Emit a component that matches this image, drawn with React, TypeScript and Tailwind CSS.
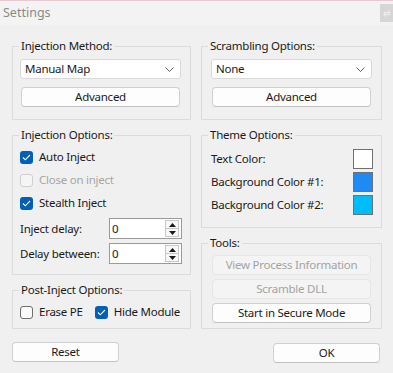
import React from "react";

const font = { fontFamily: '"Segoe UI", "Noto Sans", sans-serif' };

function Group({
  label,
  className,
  children,
}: {
  label: string;
  className?: string;
  children: React.ReactNode;
}) {
  return (
    <div className={"relative border border-[#dcdcdc] " + (className || "")}>
      <span className="absolute top-[-9px] left-[6px] whitespace-nowrap bg-[#f0f0f0] px-[2px] leading-[16px] text-[#1a1a1a]">
        {label}
      </span>
      {children}
    </div>
  );
}

function Button({
  children,
  disabled,
  className,
}: {
  children: React.ReactNode;
  disabled?: boolean;
  className?: string;
}) {
  return (
    <div
      className={
        "flex h-[20px] items-center justify-center whitespace-nowrap rounded-[4px] border leading-none " +
        (disabled
          ? "border-[#e6e6e6] bg-[#f4f4f4] text-[#a3a3a3] "
          : "border-[#d0d0d0] border-b-[#c2c2c2] bg-[#fdfdfd] text-[#1a1a1a] ") +
        (className || "")
      }
    >
      {children}
    </div>
  );
}

function Combo({ value }: { value: string }) {
  return (
    <div className="flex h-[20px] items-center justify-between rounded-[3px] border border-[#d9d9d9] bg-white pl-[4px] pr-[6px] text-[#1a1a1a]">
      <span>{value}</span>
      <svg width="9" height="5" viewBox="0 0 9 5">
        <polyline points="0.5,0.5 4.5,4.5 8.5,0.5" fill="none" stroke="#606060" strokeWidth="1" />
      </svg>
    </div>
  );
}

function Check({
  label,
  checked,
  disabled,
  className,
}: {
  label: string;
  checked?: boolean;
  disabled?: boolean;
  className?: string;
}) {
  return (
    <div className={"flex h-[20px] shrink-0 items-center gap-[6px] whitespace-nowrap " + (className || "")}>
      {checked ? (
        <div className="flex h-[13px] w-[13px] shrink-0 items-center justify-center rounded-[3px] bg-[#005fb8]">
          <svg width="9" height="7" viewBox="0 0 9 7">
            <polyline points="1,3.5 3.3,5.8 8,1" fill="none" stroke="#ffffff" strokeWidth="1.1" />
          </svg>
        </div>
      ) : (
        <div
          className={
            "h-[13px] w-[13px] shrink-0 rounded-[3px] border " +
            (disabled ? "border-[#cfcfcf] bg-[#f5f5f5]" : "border-[#6e6e6e] bg-[#fafafa]")
          }
        />
      )}
      <span className={disabled ? "text-[#a6a6a6]" : "text-[#1a1a1a]"}>{label}</span>
    </div>
  );
}

function Spin({ label }: { label: string }) {
  return (
    <div className="flex h-[21px] items-center">
      <span className="w-[89px] whitespace-nowrap text-[#1a1a1a]">{label}</span>
      <div className="flex h-[21px] w-[73px] items-center justify-between border border-[#9a9a9a] bg-white pl-[2px] pr-[2px]">
        <span className="text-[#1a1a1a]">0</span>
        <div className="flex h-[17px] w-[14px] flex-col">
          <div className="flex h-[9px] items-center justify-center border border-[#c8c8c8] bg-[#f7f7f7]">
            <svg width="7" height="4" viewBox="0 0 7 4">
              <polygon points="0,4 3.5,0 7,4" fill="#1a1a1a" />
            </svg>
          </div>
          <div className="flex h-[8px] items-center justify-center border border-t-0 border-[#c8c8c8] bg-[#f7f7f7]">
            <svg width="7" height="4" viewBox="0 0 7 4">
              <polygon points="0,0 3.5,4 7,0" fill="#1a1a1a" />
            </svg>
          </div>
        </div>
      </div>
    </div>
  );
}

function Swatch({ label, color }: { label: string; color: string }) {
  return (
    <div className="flex h-[20px] items-center justify-between">
      <span className="whitespace-nowrap text-[#1a1a1a]">{label}</span>
      <div className="h-[20px] w-[20px] border border-[#707070]" style={{ backgroundColor: color }} />
    </div>
  );
}

export default function App() {
  return (
    <div
      className="relative h-[373px] w-[393px] overflow-hidden bg-[#f0f0f0] text-[11.5px] tracking-[-0.25px]"
      style={font}
    >
      {/* title bar */}
      <div className="flex h-[25px] items-center justify-between border-t border-[#e9c9cf] bg-[#f3f3f3] pl-[3px]">
        <span className="text-[12.5px] tracking-normal text-[#8a8a8a]">Settings</span>
        <div className="mb-[1px] flex h-[18px] w-[13px] items-center justify-center bg-[#d6d6d6]">
          <span className="text-[9px] leading-none text-[#eeeeee]">⇄</span>
        </div>
      </div>

      <div className="flex gap-[10px] pl-[12px] pr-[11px] pt-[21px]">
        {/* left column */}
        <div className="flex w-[179px] flex-col">
          <Group label="Injection Method:" className="pb-[12px] pl-[7px] pr-[9px] pt-[12px]">
            <Combo value="Manual Map" />
            <Button className="mx-[1px] mt-[8px]">Advanced</Button>
          </Group>

          <Group label="Injection Options:" className="mt-[15px] pb-[10px] pl-[7px] pr-[8px] pt-[11px]">
            <Check label="Auto Inject" checked />
            <Check label="Close on inject" disabled className="mt-[3px]" />
            <Check label="Stealth Inject" checked className="mt-[3px]" />
            <div className="mt-[5px] flex flex-col gap-[4px]">
              <Spin label="Inject delay:" />
              <Spin label="Delay between:" />
            </div>
          </Group>

          <Group label="Post-Inject Options:" className="mt-[15px] flex pb-[6px] pl-[7px] pt-[11px]">
            <Check label="Erase PE" />
            <Check label="Hide Module" checked className="ml-[12px]" />
          </Group>

          <Button className="mt-[13px] w-[107px]">Reset</Button>
        </div>

        {/* right column */}
        <div className="flex w-[181px] flex-col">
          <Group label="Scrambling Options:" className="pb-[12px] pl-[9px] pr-[9px] pt-[12px]">
            <Combo value="None" />
            <Button className="mx-[1px] mt-[8px]">Advanced</Button>
          </Group>

          <Group label="Theme Options:" className="mt-[15px] flex flex-col gap-[3px] pb-[12px] pl-[9px] pr-[8px] pt-[13px]">
            <Swatch label="Text Color:" color="#ffffff" />
            <Swatch label="Background Color #1:" color="#1e8bf5" />
            <Swatch label="Background Color #2:" color="#00bcf8" />
          </Group>

          <Group label="Tools:" className="mt-[15px] flex flex-col gap-[4px] pb-[5px] pl-[10px] pr-[10px] pt-[11px]">
            <Button disabled>View Process Information</Button>
            <Button disabled>Scramble DLL</Button>
            <Button>Start in Secure Mode</Button>
          </Group>

          <Button className="ml-auto mr-[2px] mt-[14px] w-[107px]">OK</Button>
        </div>
      </div>
    </div>
  );
}
